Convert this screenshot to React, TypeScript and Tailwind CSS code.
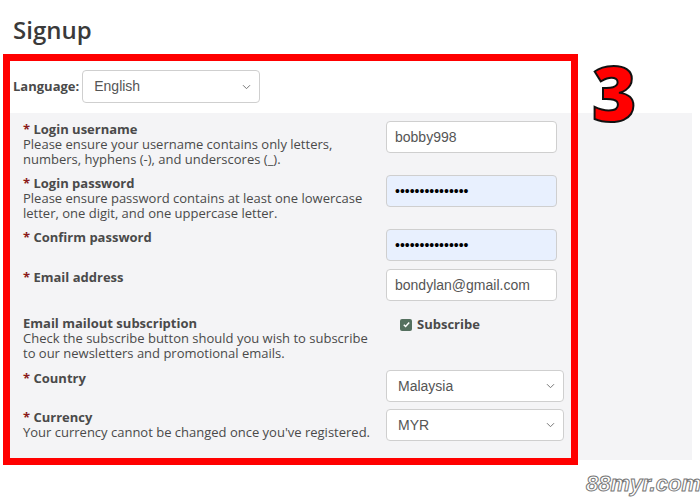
import { ReactNode } from "react";

const inputCls =
  "h-[32px] w-[171px] rounded-[4px] border border-[#cfcfcf] px-[8px] text-[14px] text-[#555] outline-none [font-family:'Liberation_Sans',Arial,sans-serif]";

function Chevron() {
  return (
    <svg
      className="pointer-events-none absolute right-[9px] top-1/2 -translate-y-1/2"
      width="9"
      height="6"
      viewBox="0 0 9 6"
      fill="none"
    >
      <path d="M1 1.2l3.5 3.5L8 1.2" stroke="#777" strokeWidth="1" />
    </svg>
  );
}

function Select({ value, width }: { value: string; width: string }) {
  return (
    <div className={`relative ${width}`}>
      <select
        defaultValue={value}
        className="h-full w-full appearance-none rounded-[4px] border border-[#cfcfcf] bg-white pl-[11px] text-[14px] text-[#555] outline-none [font-family:'Liberation_Sans',Arial,sans-serif]"
      >
        <option>{value}</option>
      </select>
      <Chevron />
    </div>
  );
}

function Label({ text, required = true }: { text: string; required?: boolean }) {
  return (
    <div className="text-[13px] font-bold leading-[16px] text-[#4a4a4a]">
      {required ? <span className="text-[#8b1a1a]">* </span> : null}
      {text}
    </div>
  );
}

function Hint({ children }: { children: ReactNode }) {
  return <div className="text-[13px] leading-[15px] text-[#4a4a4a]">{children}</div>;
}

function Row({ left, right, className = "" }: { left: ReactNode; right: ReactNode; className?: string }) {
  return (
    <div className={`grid grid-cols-[363px_1fr] items-start ${className}`}>
      <div>{left}</div>
      <div>{right}</div>
    </div>
  );
}

export default function App() {
  return (
    <div className="relative h-[497px] w-[700px] overflow-hidden bg-white [font-family:'Open_Sans','Noto_Sans',sans-serif]">
      <h1 className="pl-[13px] pt-[14px] text-[24px] font-semibold leading-[32px] text-[#3a3a3a]">Signup</h1>

      <div className="ml-[10px] mt-[8px] w-[682px]">
        <div className="flex items-center gap-[3px] pb-[10px] pl-[3px] pt-[16px]">
          <span className="text-[13px] font-bold text-[#4a4a4a]">Language:</span>
          <Select value="English" width="h-[33px] w-[178px]" />
        </div>

        <div className="bg-[#f4f4f6] pb-[19px] pl-[13px] pt-[8px]">
          <Row
            left={
              <>
                <Label text="Login username" />
                <Hint>
                  Please ensure your username contains only letters,
                  <br />
                  numbers, hyphens (-), and underscores (_).
                </Hint>
              </>
            }
            right={<input className={`${inputCls} bg-white`} defaultValue="bobby998" />}
          />
          <Row
            className="mt-[8px]"
            left={
              <>
                <Label text="Login password" />
                <Hint>
                  Please ensure password contains at least one lowercase
                  <br />
                  letter, one digit, and one uppercase letter.
                </Hint>
              </>
            }
            right={<input type="password" className={`${inputCls} bg-[#e8f0fe] text-black`} defaultValue="bobby998Secret1" />}
          />
          <Row
            className="mt-[8px]"
            left={<Label text="Confirm password" />}
            right={<input type="password" className={`${inputCls} bg-[#e8f0fe] text-black`} defaultValue="bobby998Secret1" />}
          />
          <Row
            className="mt-[8px]"
            left={<Label text="Email address" />}
            right={<input className={`${inputCls} bg-white`} defaultValue="bondylan@gmail.com" />}
          />
          <Row
            className="mt-[14px]"
            left={
              <>
                <Label text="Email mailout subscription" required={false} />
                <Hint>
                  Check the subscribe button should you wish to subscribe
                  <br />
                  to our newsletters and promotional emails.
                </Hint>
              </>
            }
            right={
              <label className="flex items-center gap-[5px] pl-[14px]">
                <span className="flex h-[12px] w-[12px] items-center justify-center rounded-[2px] bg-[#55705f]">
                  <svg width="9" height="9" viewBox="0 0 10 10" fill="none">
                    <path d="M2 5.2l2 2L8 2.8" stroke="white" strokeWidth="1.6" />
                  </svg>
                </span>
                <span className="text-[13px] font-bold text-[#4a4a4a]">Subscribe</span>
              </label>
            }
          />
          <Row
            className="mt-[9px]"
            left={<Label text="Country" />}
            right={<Select value="Malaysia" width="h-[32px] w-[178px]" />}
          />
          <Row
            className="mt-[7px]"
            left={
              <>
                <Label text="Currency" />
                <Hint>Your currency cannot be changed once you've registered.</Hint>
              </>
            }
            right={<Select value="MYR" width="h-[32px] w-[178px]" />}
          />
        </div>
      </div>

      {/* annotation overlay */}
      <div className="pointer-events-none absolute left-[3px] top-[54px] h-[411px] w-[575px] border-[7px] border-[#ff0000]" />
      <div className="absolute left-[592px] top-[54px] text-[76px] font-extrabold leading-none text-[#ff0000] [-webkit-text-stroke:2px_#111] [font-family:'Open_Sans',sans-serif]">
        3
      </div>
      <div className="absolute left-[586px] top-[472px] text-[22px] font-bold italic leading-[24px] text-white [-webkit-text-stroke:1px_#777] [font-family:'Liberation_Sans',sans-serif]">
        88myr.com
      </div>
    </div>
  );
}
